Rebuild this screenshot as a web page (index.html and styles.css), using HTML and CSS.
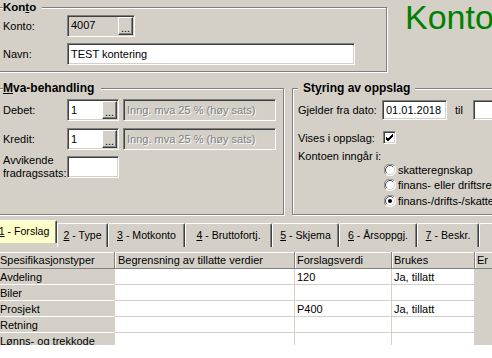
FILE: index.html
```html
<!DOCTYPE html>
<html>
<head>
<meta charset="utf-8">
<link rel="stylesheet" href="styles.css">
</head>
<body>
<div class="page">
  <div class="top">
    <fieldset class="grp g-konto">
      <legend>Kon<u>t</u>o</legend>
      <div class="row">
        <span class="lbl">Konto:</span>
        <div class="field dis f-konto"><span class="val top">4007</span><span class="dots">...</span></div>
      </div>
      <div class="row r2">
        <span class="lbl">Navn:</span>
        <div class="field f-navn"><span class="val">TEST kontering</span></div>
      </div>
    </fieldset>
    <div class="bigtitle">Konto</div>
  </div>

  <div class="mid">
    <fieldset class="grp g-mva">
      <legend><u>M</u>va-behandling</legend>
      <div class="row">
        <span class="lbl">Debet:</span>
        <div class="field f-code"><span class="val">1</span><span class="dots">...</span></div>
        <div class="field dis f-desc"><span class="val distext">Inng. mva 25 % (høy sats)</span></div>
      </div>
      <div class="row r-kredit">
        <span class="lbl">Kredit:</span>
        <div class="field f-code"><span class="val">1</span><span class="dots">...</span></div>
        <div class="field dis f-desc"><span class="val distext">Inng. mva 25 % (høy sats)</span></div>
      </div>
      <div class="row r-avv">
        <span class="lbl two">Avvikende<br>fradragssats:</span>
        <div class="field f-code"></div>
      </div>
    </fieldset>

    <fieldset class="grp g-sty">
      <legend>St<u>y</u>ring av oppslag</legend>
      <div class="srow s1">
        <span class="slbl">Gjelder fra dato:</span>
        <div class="field f-date"><span class="val">01.01.2018</span></div>
        <span class="til">til</span>
        <div class="field f-date2"></div>
      </div>
      <div class="srow s2">
        <span class="slbl">Vises i oppslag:</span>
        <span class="chk"><svg width="9" height="9" viewBox="0 0 9 9"><path d="M1 4 L3 6 L8 1 M1 5 L3 7 L8 2 M1 6 L3 8 L8 3" fill="none" stroke="#000" stroke-width="1"/></svg></span>
      </div>
      <div class="srow s3">
        <span class="slbl">Kontoen inngår i:</span>
      </div>
      <div class="radios">
        <div class="rad"><svg class="rb" width="12" height="12" viewBox="0 0 12 12"><circle cx="6" cy="6" r="5.5" fill="#fff"/><path d="M10.2 1.8 A5.5 5.5 0 0 0 1.8 10.2" fill="none" stroke="#808080"/><path d="M1.8 10.2 A5.5 5.5 0 0 0 10.2 1.8" fill="none" stroke="#fff"/><path d="M9.2 2.8 A4.5 4.5 0 0 0 2.8 9.2" fill="none" stroke="#404040"/><path d="M2.8 9.2 A4.5 4.5 0 0 0 9.2 2.8" fill="none" stroke="#d4d0c8"/></svg><span>skatteregnskap</span></div>
        <div class="rad"><svg class="rb" width="12" height="12" viewBox="0 0 12 12"><circle cx="6" cy="6" r="5.5" fill="#fff"/><path d="M10.2 1.8 A5.5 5.5 0 0 0 1.8 10.2" fill="none" stroke="#808080"/><path d="M1.8 10.2 A5.5 5.5 0 0 0 10.2 1.8" fill="none" stroke="#fff"/><path d="M9.2 2.8 A4.5 4.5 0 0 0 2.8 9.2" fill="none" stroke="#404040"/><path d="M2.8 9.2 A4.5 4.5 0 0 0 9.2 2.8" fill="none" stroke="#d4d0c8"/></svg><span>finans- eller driftsregnskap</span></div>
        <div class="rad"><svg class="rb" width="12" height="12" viewBox="0 0 12 12"><circle cx="6" cy="6" r="5.5" fill="#fff"/><path d="M10.2 1.8 A5.5 5.5 0 0 0 1.8 10.2" fill="none" stroke="#808080"/><path d="M1.8 10.2 A5.5 5.5 0 0 0 10.2 1.8" fill="none" stroke="#fff"/><path d="M9.2 2.8 A4.5 4.5 0 0 0 2.8 9.2" fill="none" stroke="#404040"/><path d="M2.8 9.2 A4.5 4.5 0 0 0 9.2 2.8" fill="none" stroke="#d4d0c8"/><circle cx="6" cy="6" r="2" fill="#000"/></svg><span>finans-/drifts-/skatteregnskap</span></div>
      </div>
    </fieldset>
  </div>

  <div class="tabs">
    <div class="tab sel t1"><u>1</u> - Forslag</div>
    <div class="tab t2"><u>2</u> - Type</div>
    <div class="tab t3"><u>3</u> - Motkonto</div>
    <div class="tab t4"><u>4</u> - Bruttofortj.</div>
    <div class="tab t5"><u>5</u> - Skjema</div>
    <div class="tab t6"><u>6</u> - Årsoppgj.</div>
    <div class="tab t7"><u>7</u> - Beskr.</div>
    <div class="tab t8"><u>8</u> - Notat</div>
  </div>

  <div class="gridwrap">
    <div class="gclip">
      <div class="grow ghead">
        <div class="gc">Spesifikasjonstyper</div>
        <div class="gc">Begrensning av tillatte verdier</div>
        <div class="gc">Forslagsverdi</div>
        <div class="gc">Brukes</div>
        <div class="gc">Er</div>
      </div>
      <div class="grow">
        <div class="gc c1">Avdeling</div><div class="gc"></div><div class="gc">120</div><div class="gc">Ja, tillatt</div><div class="gc c5"></div>
      </div>
      <div class="grow">
        <div class="gc c1">Biler</div><div class="gc"></div><div class="gc"></div><div class="gc"></div><div class="gc c5"></div>
      </div>
      <div class="grow">
        <div class="gc c1">Prosjekt</div><div class="gc"></div><div class="gc">P400</div><div class="gc">Ja, tillatt</div><div class="gc c5"></div>
      </div>
      <div class="grow">
        <div class="gc c1">Retning</div><div class="gc"></div><div class="gc"></div><div class="gc"></div><div class="gc c5"></div>
      </div>
      <div class="grow">
        <div class="gc c1">Lønns- og trekkode</div><div class="gc"></div><div class="gc"></div><div class="gc"></div><div class="gc c5"></div>
      </div>
    </div>
  </div>
</div>
</body>
</html>
```

FILE: styles.css
```css
* { box-sizing: border-box; }
html, body { margin: 0; padding: 0; }
body {
  width: 492px;
  height: 358px;
  overflow: hidden;
  background: #d4d0c8;
  font-family: "Liberation Sans", Arial, sans-serif;
  font-size: 11px;
  color: #000;
}
.page { display: flex; flex-direction: column; height: 358px; }

/* group boxes */
.grp {
  margin: 0;
  padding: 0;
  min-width: 0;
  border: 1px solid #808080;
  box-shadow: inset 1px 1px 0 #fff, 1px 1px 0 #fff;
}
.grp legend {
  padding: 0 6px 0 0;
  font-weight: bold;
  font-size: 12px;
  line-height: 14px;
  background: #d4d0c8;
}
.top { display: flex; align-items: flex-start; height: 72px; flex: none; }
.g-konto { margin-left: -8px; width: 395px; height: 72px; padding: 1px 0 0 10px; flex: none; }
.g-konto legend { font-size: 11.5px; }
.bigtitle {
  margin-left: 18px;
  font-size: 34px;
  line-height: 34px;
  color: #008000;
  white-space: nowrap;
}

.row { display: flex; align-items: center; height: 22px; }
.row.r2 { margin-top: 6px; }
.lbl { width: 64px; flex: none; }
.lbl.two { line-height: 13px; }

/* sunken fields */
.field {
  height: 22px;
  display: flex;
  align-items: center;
  background: #fff;
  border: 1px solid;
  border-color: #808080 #fff #fff #808080;
  box-shadow: inset 1px 1px 0 #404040, inset -1px -1px 0 #d4d0c8;
  padding: 1px;
  flex: none;
  overflow: hidden;
}
.field.dis { background: #d4d0c8; }
.val { flex: 1; padding-left: 2px; white-space: nowrap; }
.val.top { align-self: flex-start; padding-top: 2px; }
.distext { color: #808080; text-shadow: 1px 1px 0 #fff; }
.dots {
  flex: none;
  width: 15px;
  height: 100%;
  background: #d4d0c8;
  border: 1px solid;
  border-color: #fff #404040 #404040 #fff;
  box-shadow: inset -1px -1px 0 #808080;
  display: flex;
  align-items: flex-end;
  justify-content: center;
  line-height: 10px;
  padding-bottom: 1px;
  font-size: 11px;
}
.f-konto { width: 68px; }
.f-navn { width: 288px; }
.f-code { width: 52px; }
.f-desc { width: 153px; margin-left: 4px; }

.mid { display: flex; margin-top: 9px; height: 134px; flex: none; }
.g-mva { margin-left: -8px; width: 292px; height: 134px; padding: 4px 0 0 10px; flex: none; }
.g-mva legend { padding-right: 7px; }
.row.r-kredit { margin-top: 7px; }
.row.r-avv { margin-top: 6px; }

.g-sty { margin-left: 8px; width: 240px; height: 134px; padding: 5px 0 0 5px; flex: none; }
.g-sty legend { padding: 0 5px; }
.srow { display: flex; align-items: center; }
.slbl { width: 84px; flex: none; white-space: nowrap; }
.s1 { height: 20px; }
.f-date { width: 65px; height: 20px; }
.f-date2 { width: 40px; height: 20px; margin-left: 10px; }
.til { margin-left: 8px; }
.s2 { height: 13px; margin-top: 11px; }
.chk {
  width: 13px; height: 13px; flex: none;
  margin-left: 1px;
  background: #fff;
  border: 1px solid;
  border-color: #808080 #fff #fff #808080;
  box-shadow: inset 1px 1px 0 #404040, inset -1px -1px 0 #d4d0c8;
  display: flex; align-items: center; justify-content: center;
}
.chk svg { display: block; }
.s3 { height: 12px; margin-top: 6px; line-height: 12px; }
.radios { margin-left: 86px; }
.rad { display: flex; align-items: center; height: 15.5px; white-space: nowrap; }
.rb { display: block; flex: none; margin-right: 2px; }

/* tabs */
.tabs {
  display: flex;
  align-items: flex-start;
  height: 37px;
  padding-top: 8px;
  margin-left: -9px;
  flex: none;
  white-space: nowrap;
}
.tab {
  flex: none;
  height: 24px;
  background: #d4d0c8;
  border-top: 1px solid #fff;
  border-left: 1px solid #fff;
  border-right: 1px solid #404040;
  box-shadow: inset -1px 0 0 #808080;
  border-radius: 2px 2px 0 0;
  font-size: 10.6px;
  line-height: 22px;
  text-align: center;
}
.tab.sel {
  margin-top: -3px;
  height: 23px;
  background: #ffffc8;
  line-height: 20px;
}
.t1 { width: 66px; }
.t2 { width: 51px; }
.t3 { width: 77px; }
.t4 { width: 87px; }
.t5 { width: 67px; }
.t6 { width: 78px; }
.t7 { width: 62px; }
.t8 { width: 70px; }

/* grid */
.gridwrap { flex: 1; background: #fff; }
.gclip { height: 93px; overflow: hidden; margin-left: -2px; }
.grow {
  display: grid;
  grid-template-columns: 117px 180px 97px 83px 40px;
  height: 16px;
}
.gc {
  border-right: 1px solid #d4d0c8;
  border-bottom: 1px solid #d4d0c8;
  background: #fff;
  padding: 1px 0 0 2px;
  line-height: 14px;
  white-space: nowrap;
  overflow: hidden;
}
.ghead { height: 17px; }
.ghead .gc {
  background: #d4d0c8;
  border-right: 1px solid #808080;
  border-bottom: 1px solid #808080;
  box-shadow: inset 1px 1px 0 #fff;
  padding-top: 1px;
  line-height: 15px;
}
.ghead .gc:first-child { padding-left: 2px; }
.ghead .gc:nth-child(2) { padding-left: 3px; }
.gc.c1 { background: #d4d0c8; border-bottom: 1px solid #fff; border-right: 1px solid #d4d0c8; }
.gc.c5 { background: #d4d0c8; border: 0; }
```
